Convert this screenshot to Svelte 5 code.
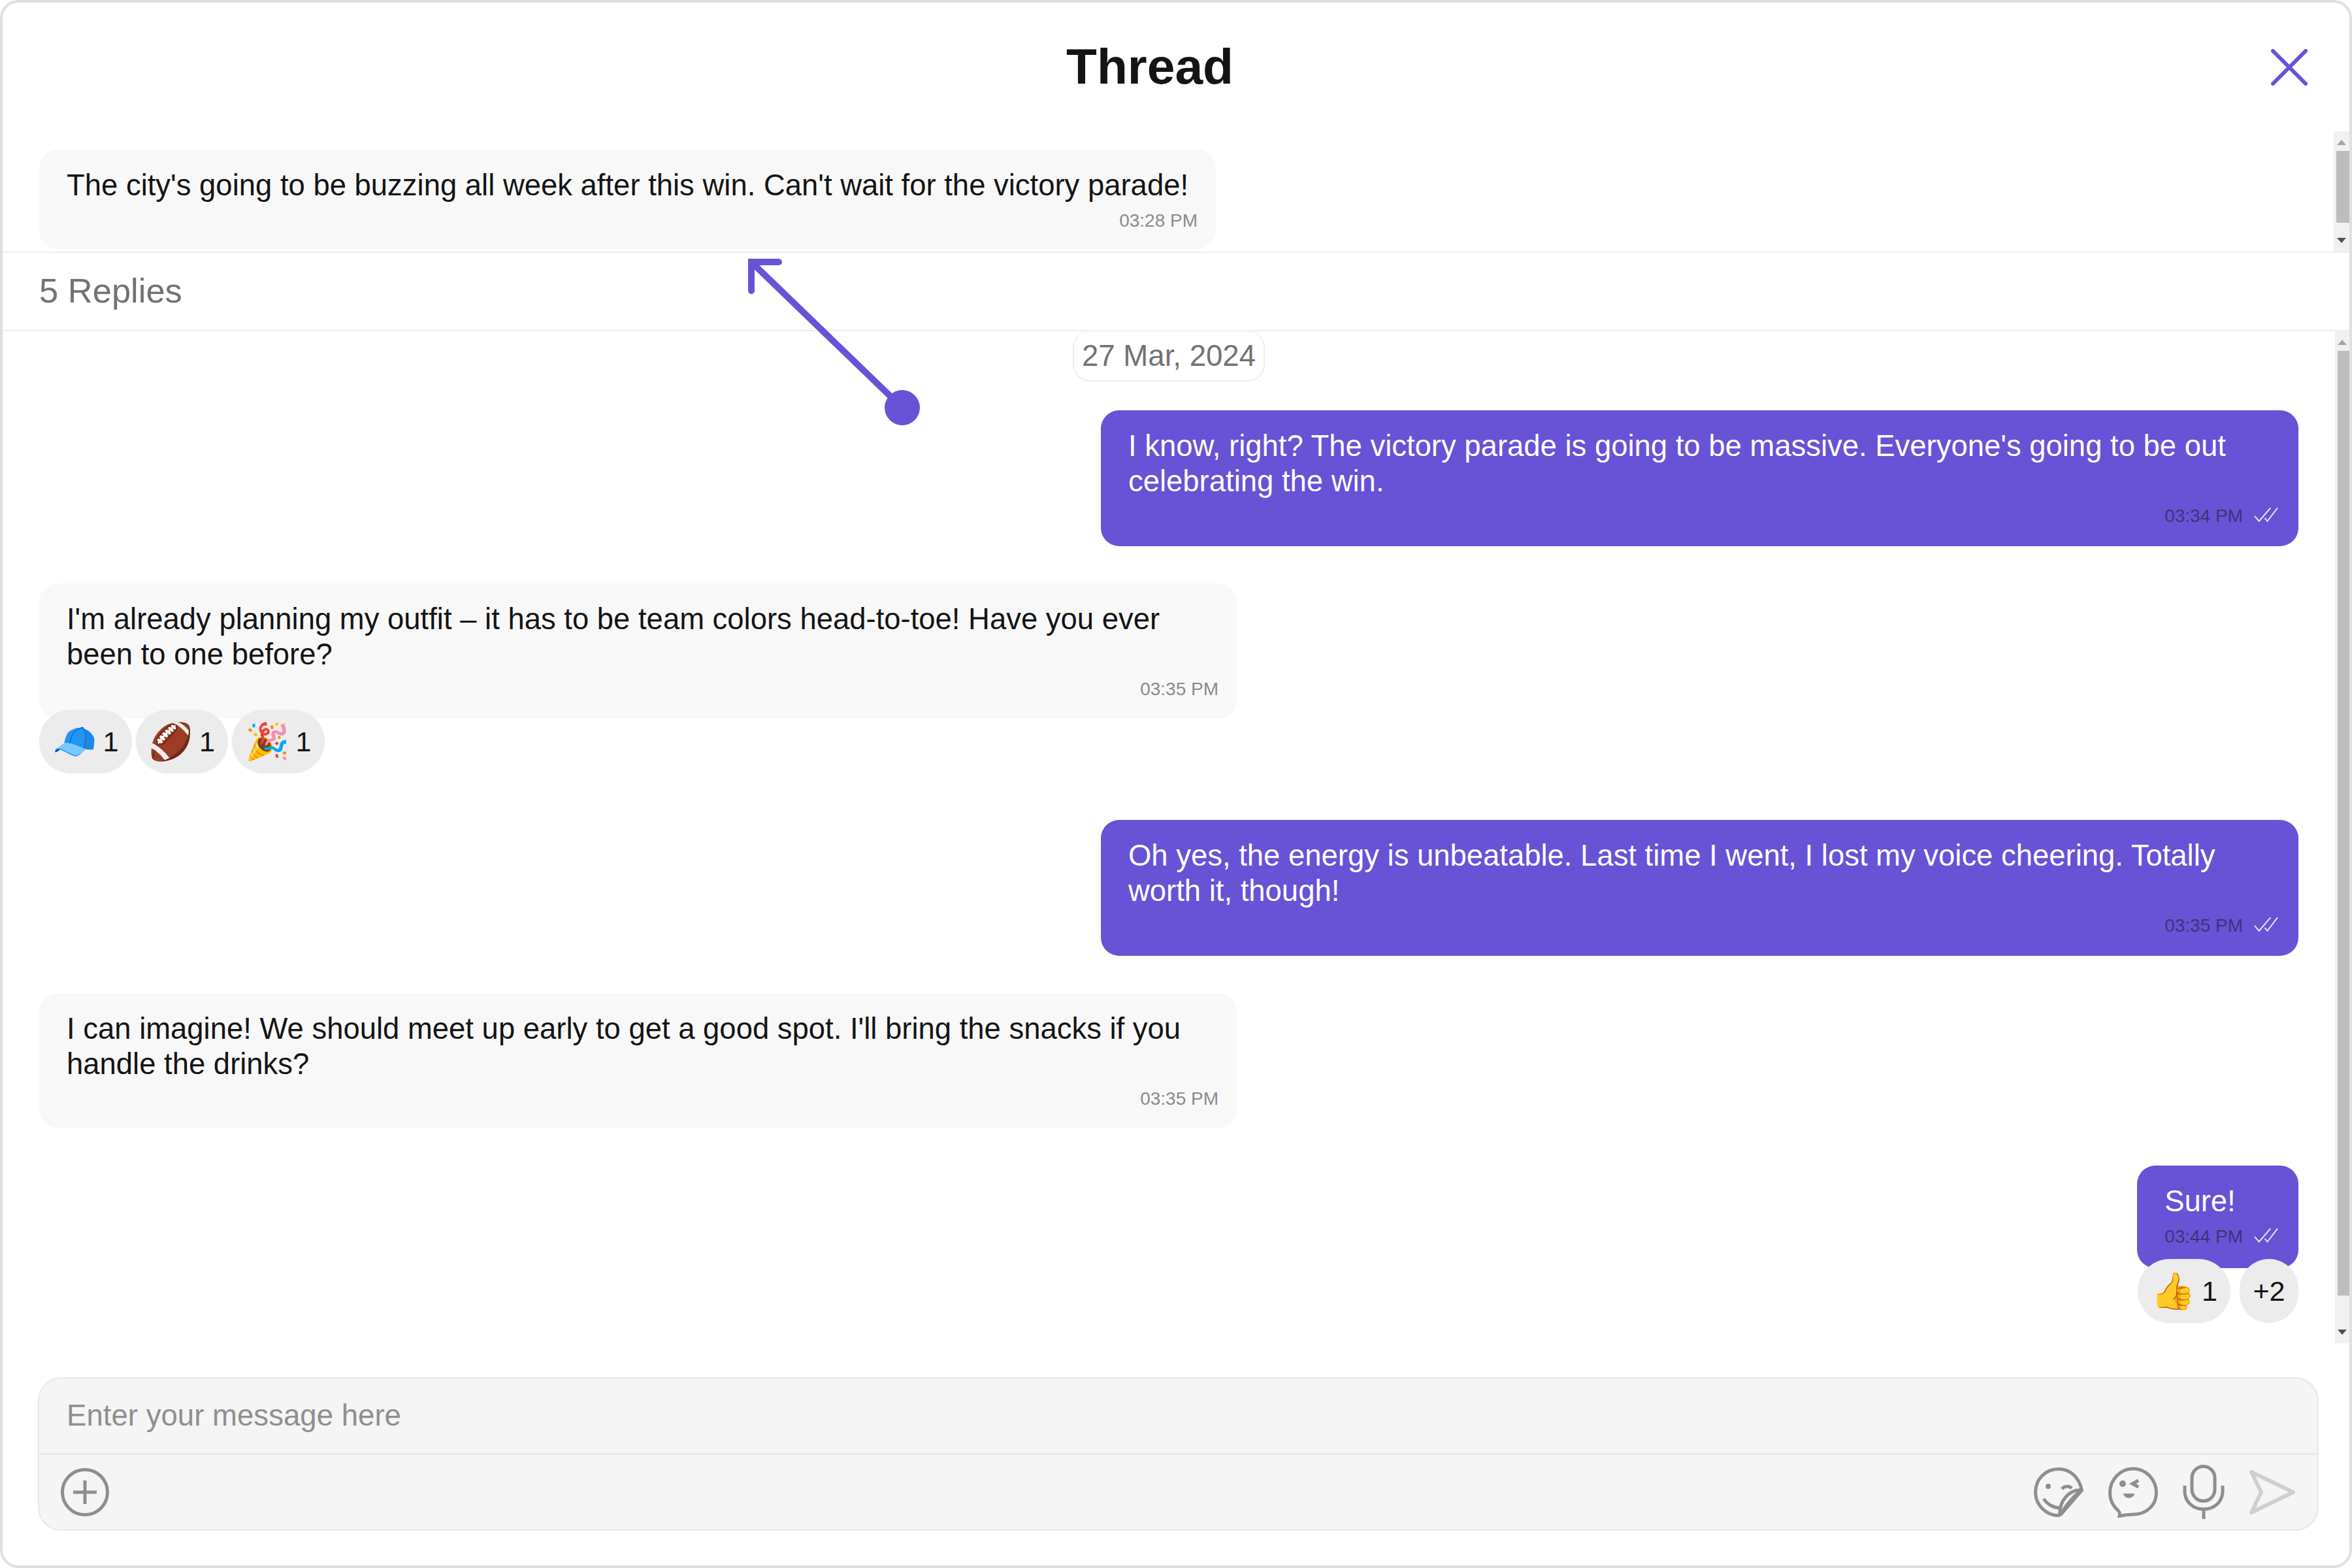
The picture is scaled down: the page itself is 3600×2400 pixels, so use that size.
<script lang="ts">
  type Reaction = { emoji?: string; count: string };
  type Message = {
    mine: boolean;
    text: string;
    time: string;
    reactions?: Reaction[];
  };

  const messages: Message[] = [
    {
      mine: true,
      text: "I know, right? The victory parade is going to be massive. Everyone's going to be out celebrating the win.",
      time: "03:34 PM",
    },
    {
      mine: false,
      text: "I'm already planning my outfit – it has to be team colors head-to-toe! Have you ever been to one before?",
      time: "03:35 PM",
      reactions: [
        { emoji: "🧢", count: "1" },
        { emoji: "🏈", count: "1" },
        { emoji: "🎉", count: "1" },
      ],
    },
    {
      mine: true,
      text: "Oh yes, the energy is unbeatable. Last time I went, I lost my voice cheering. Totally worth it, though!",
      time: "03:35 PM",
    },
    {
      mine: false,
      text: "I can imagine! We should meet up early to get a good spot. I'll bring the snacks if you handle the drinks?",
      time: "03:35 PM",
    },
    {
      mine: true,
      text: "Sure!",
      time: "03:44 PM",
      reactions: [{ emoji: "👍", count: "1" }, { count: "+2" }],
    },
  ];
</script>

<div class="thread">
  <header class="thread-head">
    <h1>Thread</h1>
    <button class="close" aria-label="Close">
      <svg viewBox="0 0 56 56" width="56" height="56">
        <path d="M3 3 53 53M53 3 3 53" fill="none" stroke="#6852d6" stroke-width="6" stroke-linecap="round" />
      </svg>
    </button>
  </header>

  <section class="parent">
    <div class="parent-body">
      <div class="bubble incoming parent-bubble">
        <p>The city's going to be buzzing all week after this win. Can't wait for the victory parade!</p>
        <div class="meta"><span>03:28 PM</span></div>
      </div>
    </div>
    <div class="scrollbar parent-bar">
      <i class="arrow up"></i>
      <b class="thumb"></b>
      <i class="arrow down"></i>
    </div>
  </section>

  <div class="replies">5 Replies</div>

  <section class="list">
    <div class="list-body">
      <div class="date"><span>27 Mar, 2024</span></div>
      {#each messages as m}
        <div class="row" class:mine={m.mine} class:has-reactions={m.reactions}>
          <div class="bubble" class:incoming={!m.mine} class:outgoing={m.mine}>
            <p>{m.text}</p>
            <div class="meta">
              <span>{m.time}</span>
              {#if m.mine}
                <svg class="ticks" viewBox="0 0 38 24" width="37" height="24">
                  <path d="M1 14 8 22 26 1M17 17 21 22 37 1" fill="none" stroke="#fff" stroke-opacity=".85" stroke-width="2" />
                </svg>
              {/if}
            </div>
          </div>
          {#if m.reactions}
            <div class="reactions">
              {#each m.reactions as r}
                <div class="pill" class:more={!r.emoji}>
                  {#if r.emoji}<span class="emoji">{r.emoji}</span>{/if}
                  <span>{r.count}</span>
                </div>
              {/each}
            </div>
          {/if}
        </div>
      {/each}
    </div>
    <div class="scrollbar list-bar">
      <i class="arrow up"></i>
      <b class="thumb"></b>
      <i class="arrow down"></i>
    </div>
  </section>

  <footer class="composer">
    <input type="text" placeholder="Enter your message here" />
    <div class="tools">
      <svg viewBox="0 0 74 74" width="74" height="74" class="ic">
        <circle cx="37" cy="37" r="34.5" />
        <path d="M37 19v36M19 37h36" />
      </svg>
      <span class="grow"></span>
      <svg viewBox="0 0 76 76" width="76" height="76" class="ic sticker">
        <path d="M40 73.500C20 75 2.500 58 2.500 38S18 2.500 38 2.500C55 2.500 69 14 73.500 35L40 73.500" />
        <path d="M73.500 35C56 33 38 50 40 73.500M73.500 35C64 41 52 54 44 67" stroke-width="3" />
        <path d="M15 48C20 56 30 62 40 62M43 33C47 28 54 28 58 32" />
        <circle class="dot" cx="22" cy="29" r="4" />
      </svg>
      <svg viewBox="0 0 76 78" width="76" height="78" class="ic wink">
        <path d="M17 75.500C18 72 18 70 15 67 7 60 2.500 51 2.500 40 2.500 20 18 3 38 3S73.500 20 73.500 40 57 73 38 73C30 73 24 74 17 75.500Z" />
        <circle class="dot" cx="22" cy="26" r="5" />
        <path d="M46 21 37 26 46 31" stroke-width="4" />
        <path class="dot" d="M23 41H40C39 50 24 50 23 41Z" />
      </svg>
      <svg viewBox="0 0 64 84" width="64" height="84" class="ic">
        <rect x="14" y="2.500" width="35" height="53" rx="17.500" />
        <path d="M3 32V40C3 56 15 68 32 68S61 56 61 40V32M32 68V83" />
      </svg>
      <svg viewBox="0 0 70 68" width="70" height="68" class="send">
        <path d="M3 3 67 34 3 65 18 34Z" />
      </svg>
    </div>
  </footer>

  <svg class="pointer" viewBox="0 0 300 280" width="300" height="280">
    <path d="M266 246 35 23M77 23H35V67" fill="none" stroke="#6852d6" stroke-width="10" stroke-linecap="round" />
    <circle cx="266" cy="246" r="27" fill="#6852d6" />
  </svg>
</div>

<style>
  :global(body) {
    margin: 0;
    background: #fff;
  }

  .thread {
    position: relative;
    box-sizing: border-box;
    width: 3600px;
    height: 2400px;
    display: flex;
    flex-direction: column;
    border: 4px solid #e0e0e0;
    border-radius: 28px;
    background: #fff;
    color: #141414;
    font-family: "Liberation Sans", Arial, sans-serif;
  }

  .thread-head {
    flex: none;
    height: 197px;
    display: flex;
    align-items: center;
    justify-content: center;
    padding: 0 64px 0 0;
  }

  h1 {
    flex: 1;
    margin: -3px -40px 0 0;
    text-align: center;
    font-size: 76.8px;
    font-weight: 700;
  }

  .close {
    flex: none;
    width: 56px;
    height: 56px;
    padding: 0;
    border: 0;
    background: none;
  }

  .close svg {
    display: block;
  }

  .parent {
    flex: none;
    height: 184px;
    display: flex;
    border-bottom: 2px solid #eee;
    box-sizing: content-box;
  }

  .parent-body {
    flex: 1;
    padding: 28px 0 0 56px;
  }

  .bubble {
    box-sizing: border-box;
    width: fit-content;
    max-width: 1833px;
    padding: 28px 28px 0 42px;
    border-radius: 28px;
  }

  .bubble p {
    margin: 0;
    padding-right: 14px;
    font-size: 45.45px;
    line-height: 53.5px;
  }

  .incoming {
    background: #f8f8f8;
    height: 207px;
  }

  .outgoing {
    background: #6852d6;
    color: #fff;
    height: 208px;
    padding-right: 31px;
  }

  .outgoing p {
    padding-right: 11px;
  }

  .parent-bubble {
    height: 152px;
  }

  .meta {
    display: flex;
    justify-content: flex-end;
    align-items: center;
    gap: 17px;
    margin-top: 10px;
    height: 34px;
    font-size: 28px;
    color: #8a8a8a;
  }

  .outgoing .meta {
    color: rgba(20, 20, 20, 0.5);
  }

  .ticks {
    display: block;
    margin-top: -4px;
  }

  .replies {
    flex: none;
    box-sizing: border-box;
    height: 120px;
    display: flex;
    align-items: center;
    padding: 0 0 3px 56px;
    border-bottom: 2px solid #eee;
    font-size: 52.5px;
    color: #727272;
  }

  .list {
    flex: none;
    height: 1549px;
    display: flex;
  }

  .list-body {
    flex: 1;
    display: flex;
    flex-direction: column;
    padding: 0 56px 0 56px;
  }

  .date {
    display: flex;
    justify-content: center;
    margin: -1px 0 44px;
  }

  .date span {
    box-sizing: border-box;
    width: 294px;
    height: 78px;
    display: flex;
    align-items: center;
    justify-content: center;
    border: 2px solid #eee;
    border-top-color: #f6f6f6;
    border-radius: 26px;
    font-size: 45.6px;
    color: #727272;
  }

  .row {
    display: flex;
    flex-direction: column;
    align-items: flex-start;
    margin-bottom: 57px;
  }

  .row.mine {
    align-items: flex-end;
  }

  .row.has-reactions {
    margin-bottom: 71px;
  }

  .row.mine:last-child .outgoing {
    height: 157px;
  }

  .reactions {
    position: relative;
    display: flex;
    gap: 6px;
    margin-top: -14px;
  }

  .mine .reactions {
    gap: 14px;
  }

  .pill {
    box-sizing: border-box;
    height: 98px;
    min-width: 90px;
    display: flex;
    align-items: center;
    justify-content: center;
    gap: 9px;
    padding: 0 20px;
    border-radius: 49px;
    background: #ececec;
    font-size: 43.2px;
    color: #141414;
  }

  .pill.more {
    padding: 0;
  }

  .emoji {
    font-family: "Noto Color Emoji", "Liberation Sans", sans-serif;
    font-size: 55px;
    line-height: 1;
  }

  .scrollbar {
    flex: none;
    display: flex;
    flex-direction: column;
    align-items: stretch;
    background: #f1f1f1;
  }

  .parent-bar {
    width: 24px;
    height: 184px;
  }

  .list-bar {
    width: 22px;
    height: 1549px;
  }

  .thumb {
    display: block;
    margin-left: 4px;
    background: #bdbdbd;
  }

  .parent-bar .thumb {
    height: 110px;
  }

  .list-bar .thumb {
    height: 1446px;
  }

  .arrow {
    flex: none;
    align-self: center;
    width: 0;
    height: 0;
    border-left: 7px solid transparent;
    border-right: 7px solid transparent;
  }

  .arrow.up {
    margin: 13px 0 9px;
    border-bottom: 8px solid #a3a3a3;
  }

  .arrow.down {
    margin-top: auto;
    margin-bottom: 13px;
    border-top: 8px solid #505050;
  }

  .composer {
    flex: none;
    box-sizing: border-box;
    width: 3491px;
    height: 235px;
    margin: 52px 0 0 54px;
    display: flex;
    flex-direction: column;
    border: 2px solid #e8e8e8;
    border-radius: 36px;
    background: #f5f5f5;
  }

  input {
    flex: none;
    box-sizing: border-box;
    width: 100%;
    height: 117px;
    padding: 0 42px;
    border: 0;
    border-bottom: 3px solid #e8e8e8;
    outline: 0;
    background: transparent;
    font-family: inherit;
    font-size: 45.6px;
    color: #141414;
  }

  input::placeholder {
    color: #8f8f8f;
    opacity: 1;
  }

  .tools {
    flex: 1;
    display: flex;
    align-items: center;
    padding: 0 34px 0 33px;
    gap: 38px;
  }

  .grow {
    flex: 1;
  }

  .ic path,
  .ic rect,
  .ic circle {
    fill: none;
    stroke: #8e8e8e;
    stroke-width: 5;
  }

  .ic .dot {
    fill: #8e8e8e;
    stroke: none;
  }

  .send path {
    fill: none;
    stroke: #cfcfcf;
    stroke-width: 6;
    stroke-linejoin: round;
  }

  .pointer {
    position: absolute;
    left: 1111px;
    top: 374px;
  }
</style>
